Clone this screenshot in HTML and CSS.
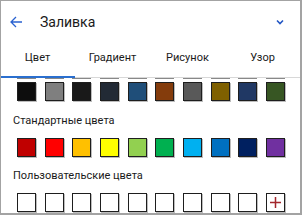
FILE: index.html
```html
<!DOCTYPE html>
<html>
<head>
<meta charset="utf-8">
<link rel="stylesheet" href="styles.css">
</head>
<body>
<div class="frame">
  <div class="header">
    <svg class="back" width="14" height="14" viewBox="0 0 14 14"><path d="M13 7H2M7 2L2 7l5 5" fill="none" stroke="#2a62d0" stroke-width="1.3"/></svg>
    <span class="title">Заливка</span>
    <svg class="chev" width="8" height="6" viewBox="0 0 8 6"><path d="M1 1.5l3 3 3-3" fill="none" stroke="#2256c4" stroke-width="1.6"/></svg>
  </div>
  <div class="tabs">
    <div class="tab active">Цвет</div>
    <div class="tab">Градиент</div>
    <div class="tab">Рисунок</div>
    <div class="tab">Узор</div>
  </div>
  <div class="peek">
    <i></i><i></i><i></i><i></i><i></i><i></i><i></i><i></i><i></i><i></i>
  </div>
  <div class="row first">
    <div class="sw" style="background:#0d0d0d"></div>
    <div class="sw" style="background:#7f7f7f"></div>
    <div class="sw" style="background:#191919"></div>
    <div class="sw" style="background:#222a35"></div>
    <div class="sw" style="background:#1f4e79"></div>
    <div class="sw" style="background:#843c0c"></div>
    <div class="sw" style="background:#595959"></div>
    <div class="sw" style="background:#7f6000"></div>
    <div class="sw" style="background:#203864"></div>
    <div class="sw" style="background:#375623"></div>
  </div>
  <div class="label">Стандартные цвета</div>
  <div class="row">
    <div class="sw" style="background:#c00000"></div>
    <div class="sw" style="background:#ff0000"></div>
    <div class="sw" style="background:#ffc000"></div>
    <div class="sw" style="background:#ffff00"></div>
    <div class="sw" style="background:#92d050"></div>
    <div class="sw" style="background:#00b050"></div>
    <div class="sw" style="background:#00b0f0"></div>
    <div class="sw" style="background:#0070c0"></div>
    <div class="sw" style="background:#002060"></div>
    <div class="sw" style="background:#7030a0"></div>
  </div>
  <div class="label second">Пользовательские цвета</div>
  <div class="row">
    <div class="sw empty"></div>
    <div class="sw empty"></div>
    <div class="sw empty"></div>
    <div class="sw empty"></div>
    <div class="sw empty"></div>
    <div class="sw empty"></div>
    <div class="sw empty"></div>
    <div class="sw empty"></div>
    <div class="sw empty"></div>
    <div class="sw empty add"><svg width="13" height="13" viewBox="0 0 13 13"><path d="M6.5 1v11M1 6.5h11" stroke="#a3262c" stroke-width="1.5"/></svg></div>
  </div>
</div>
</body>
</html>
```
FILE: styles.css
```css
html, body {
  margin: 0;
  padding: 0;
  background: #fff;
}
body {
  font-family: Roboto, "Liberation Sans", sans-serif;
  color: #222;
}
.frame {
  width: 302px;
  height: 215px;
  box-sizing: border-box;
  border: 1px solid #a3a3a3;
  border-right-width: 2px;
  border-bottom-width: 2px;
  overflow: hidden;
}
.header {
  height: 39px;
  display: flex;
  align-items: center;
  padding-left: 8px;
  padding-right: 16px;
  padding-top: 2px;
  box-sizing: border-box;
}
.back {
  display: block;
}
.title {
  margin-left: 17px;
  font-size: 14px;
  color: #1a1a1a;
  flex: 1;
}
.chev {
  display: block;
}
.tabs {
  height: 38px;
  display: grid;
  grid-template-columns: repeat(4, 1fr);
  border-bottom: 1px solid #d8d8d8;
  box-sizing: border-box;
  margin-left: -1px;
}
.tab {
  font-size: 11px;
  color: #1a1a1a;
  display: flex;
  align-items: center;
  justify-content: center;
  padding-bottom: 3px;
  position: relative;
}
.tab.active::after {
  content: "";
  position: absolute;
  left: 0;
  right: 0;
  bottom: -1px;
  height: 2px;
  background: #2a6fcf;
}
.peek,
.row {
  display: grid;
  grid-template-columns: repeat(10, 19px);
  justify-content: space-between;
  padding: 0 15px 0 16px;
}
.peek i {
  display: block;
  height: 1px;
  background: #888;
}
.row.first {
  margin-top: 3px;
}
.sw {
  width: 19px;
  height: 19px;
  box-sizing: border-box;
  border: 1px solid #1e1e1e;
  box-shadow: 1px 1px 0 #bdbdbd;
}
.sw.empty {
  background: #fff;
}
.sw.add {
  display: flex;
  align-items: center;
  justify-content: center;
}
.sw.add svg {
  display: block;
}
.label {
  font-size: 11px;
  line-height: 16px;
  color: #1a1a1a;
  padding-left: 12px;
  margin: 12px 0 9px;
}
.label.second {
  margin-top: 11px;
}
```
